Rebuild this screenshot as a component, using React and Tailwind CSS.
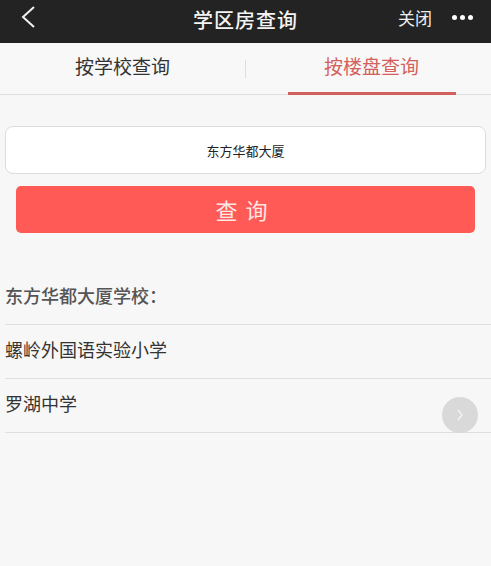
import React, { useState } from 'react';

const font = { fontFamily: '"Noto Sans CJK SC", "Noto Sans", sans-serif' };

function Header() {
  return (
    <div className="grid h-[43px] grid-cols-[1fr_auto_1fr] items-center bg-[#232323] text-white">
      <div className="flex items-center pb-[10px] pl-[20px]">
        <svg width="16" height="22" viewBox="0 0 16 22" fill="none">
          <path d="M14 1 L3 11 L14 21" stroke="#f2f2f2" strokeWidth="2" />
        </svg>
      </div>
      <span className="pb-[4px] text-[20px] font-medium leading-none tracking-[1px] text-[#f4f4f4]">学区房查询</span>
      <div className="flex items-center justify-end gap-[20px] pb-[8px] pr-[18px]">
        <span className="text-[17px] leading-none text-[#eeeeee]">关闭</span>
        <div className="flex gap-[3px]">
          <span className="h-[5px] w-[5px] rounded-full bg-white" />
          <span className="h-[5px] w-[5px] rounded-full bg-white" />
          <span className="h-[5px] w-[5px] rounded-full bg-white" />
        </div>
      </div>
    </div>
  );
}

function Tabs({ active, setActive }) {
  const tabs = ['按学校查询', '按楼盘查询'];
  return (
    <div className="flex h-[52px] items-center border-b border-[#dedede] bg-[#f8f8f8]">
      {tabs.map((t, i) => (
        <React.Fragment key={t}>
          {i > 0 && <span className="h-[18px] w-px bg-[#dddddd]" />}
          <button
            onClick={() => setActive(i)}
            className={`flex h-full flex-1 flex-col items-center ${i > 0 ? 'translate-x-[3px]' : ''} ${
              active === i ? 'text-[#d4605c]' : 'text-[#333333]'
            }`}
          >
            <span className="flex flex-1 items-center pb-[2px] text-[19px]">{t}</span>
            <span className={`mb-[-1px] h-[3px] w-[168px] ${active === i ? 'bg-[#d2605d]' : 'bg-transparent'}`} />
          </button>
        </React.Fragment>
      ))}
    </div>
  );
}

export default function App() {
  const [active, setActive] = useState(1);
  const [query, setQuery] = useState('东方华都大厦');
  const schools = ['螺岭外国语实验小学', '罗湖中学'];

  return (
    <div className="relative h-[566px] w-[491px] overflow-hidden bg-[#f7f7f7]" style={font}>
      <Header />
      <Tabs active={active} setActive={setActive} />

      <div className="flex flex-col gap-[12px] px-[5px] pt-[31px]">
        <input
          value={query}
          onChange={(e) => setQuery(e.target.value)}
          className="h-[48px] w-full rounded-[8px] border border-[#dcdcdc] bg-white text-center text-[13px] text-[#222222] outline-none"
        />
        <button className="mx-[11px] h-[47px] rounded-[5px] bg-[#ff5a56] text-[22px] tracking-[8px] text-[#ffe9e6]">
          查询
        </button>
      </div>

      <div className="pl-[5px] pt-[47px]">
        <div className="flex h-[45px] items-start border-b border-[#dfdfdf] pt-[2px] text-[18px] font-medium text-[#555555]">
          东方华都大厦学校：
        </div>
        {schools.map((s) => (
          <div
            key={s}
            className="flex h-[54px] items-center border-b border-[#dfdfdf] pb-[4px] text-[18px] text-[#333333]"
          >
            {s}
          </div>
        ))}
      </div>

      <div className="absolute left-[442px] top-[397px] flex h-[36px] w-[36px] items-center justify-center rounded-full bg-[#d9d9d9]">
        <svg width="10" height="14" viewBox="0 0 10 14" fill="none">
          <path d="M3 2 L7 7 L3 12" stroke="#f2f2f2" strokeWidth="1.5" />
        </svg>
      </div>
    </div>
  );
}
